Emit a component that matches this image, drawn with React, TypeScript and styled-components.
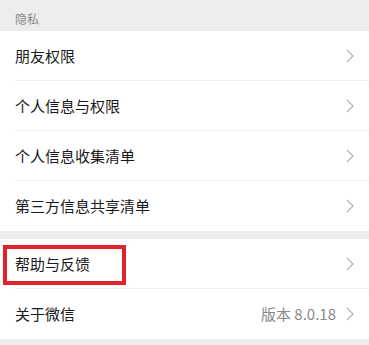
import React from "react";
import styled, { createGlobalStyle } from "styled-components";

const GlobalStyle = createGlobalStyle`
  body {
    margin: 0;
    background: #ededed;
    font-family: "Noto Sans CJK SC", "Noto Sans", sans-serif;
  }
`;

function Chevron() {
  return (
    <svg width="8" height="14" viewBox="0 0 8 14">
      <path d="M1 1 L7 7 L1 13" fill="none" stroke="#b2b2b2" strokeWidth="1.2" />
    </svg>
  );
}

type Item = { label: string; value?: string; marked?: boolean };

const privacy: Item[] = [
  { label: "朋友权限" },
  { label: "个人信息与权限" },
  { label: "个人信息收集清单" },
  { label: "第三方信息共享清单" },
];

const about: Item[] = [
  { label: "帮助与反馈", marked: true },
  { label: "关于微信", value: "版本 8.0.18" },
];

function Rows({ items }: { items: Item[] }) {
  return (
    <Section>
      {items.map((it, i) => (
        <Row key={it.label}>
          {it.marked && <Mark />}
          <Inner $last={i === items.length - 1}>
            <Label>{it.label}</Label>
            {it.value && <Value>{it.value}</Value>}
            <Chevron />
          </Inner>
        </Row>
      ))}
    </Section>
  );
}

export default function App() {
  return (
    <Page>
      <GlobalStyle />
      <Header>隐私</Header>
      <Rows items={privacy} />
      <Gap />
      <Rows items={about} />
    </Page>
  );
}

const Page = styled.div`
  display: flex;
  flex-direction: column;
  width: 369px;
  height: 345px;
  overflow: hidden;
`;

const Header = styled.div`
  height: 31px;
  box-sizing: border-box;
  padding: 0 15px 4px;
  display: flex;
  align-items: flex-end;
  font-size: 12px;
  line-height: 16px;
  color: #8a8a8a;
`;

const Section = styled.div`
  background: #fff;
`;

const Gap = styled.div`
  height: 8px;
`;

const Row = styled.div`
  position: relative;
  padding-left: 15px;
`;

const Inner = styled.div<{ $last: boolean }>`
  height: 50px;
  box-sizing: border-box;
  display: flex;
  align-items: center;
  padding-right: 15px;
  border-bottom: 1px solid ${(p) => (p.$last ? "transparent" : "#efefef")};
`;

const Label = styled.span`
  flex: 1;
  font-size: 15px;
  color: #191919;
`;

const Value = styled.span`
  font-size: 15px;
  color: #888;
  margin-right: 10px;
`;

const Mark = styled.div`
  position: absolute;
  left: 3px;
  top: 6px;
  width: 123px;
  height: 40px;
  box-sizing: border-box;
  border: 4px solid #e2222b;
`;
